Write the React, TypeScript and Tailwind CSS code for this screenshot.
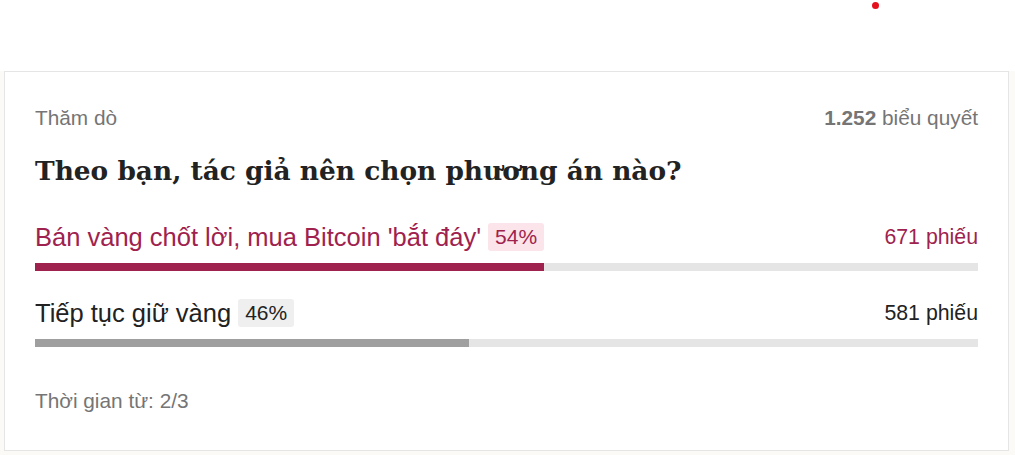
import React from "react";

type Option = {
  label: string;
  percent: number;
  votes: number;
  top?: boolean;
};

const options: Option[] = [
  { label: "Bán vàng chốt lời, mua Bitcoin 'bắt đáy'", percent: 54, votes: 671, top: true },
  { label: "Tiếp tục giữ vàng", percent: 46, votes: 581 },
];

function PollOption({ opt }: { opt: Option }) {
  const color = opt.top ? "text-[#9f224e]" : "text-[#222222]";
  return (
    <div className="flex flex-col">
      <div className="flex items-center justify-between">
        <div className="flex items-center gap-[7px]">
          <span className={`text-[25.5px] leading-[30px] ${color}`}>{opt.label}</span>
          <span
            className={`rounded-[3px] px-[7px] text-[21px] leading-[28px] ${
              opt.top ? "bg-[#fbe4ea] text-[#9f224e]" : "bg-[#efefef] text-[#222222]"
            }`}
          >
            {opt.percent}%
          </span>
        </div>
        <span className={`text-[21.3px] leading-[28px] ${color}`}>{opt.votes} phiếu</span>
      </div>
      <div className="mt-[11px] h-[8px] w-full bg-[#e5e5e5]">
        <div
          className={`h-full ${opt.top ? "bg-[#9f224e]" : "bg-[#9f9f9f]"}`}
          style={{ width: `${opt.percent}%` }}
        />
      </div>
    </div>
  );
}

export default function App() {
  return (
    <div
      className="min-h-screen bg-[#fbfaf7]"
      style={{ fontFamily: "'Liberation Sans', Arial, sans-serif" }}
    >
      <div className="relative h-[71px] bg-white">
        <span className="absolute left-[872px] top-[2px] h-[7px] w-[7px] rounded-full bg-[#e5101d]" />
      </div>
      <div className="ml-[4px] mr-[6px] border border-[#e5e5e5] bg-white px-[30px] pb-[36px] pt-[33px]">
        <div className="flex items-center justify-between text-[20.8px] leading-[26px] text-[#757575]">
          <span>Thăm dò</span>
          <span>
            <b className="font-bold">1.252</b> biểu quyết
          </span>
        </div>
        <h2
          className="mt-[22px] text-[26.4px] font-bold leading-[36px] text-[#222222]"
          style={{ fontFamily: "'DejaVu Serif', 'Liberation Serif', serif" }}
        >
          Theo bạn, tác giả nên chọn phương án nào?
        </h2>
        <div className="mt-[33px] flex flex-col gap-[27px]">
          {options.map((o) => (
            <PollOption key={o.label} opt={o} />
          ))}
        </div>
        <div className="mt-[41px] text-[20.8px] leading-[26px] text-[#757575]">Thời gian từ: 2/3</div>
      </div>
    </div>
  );
}
